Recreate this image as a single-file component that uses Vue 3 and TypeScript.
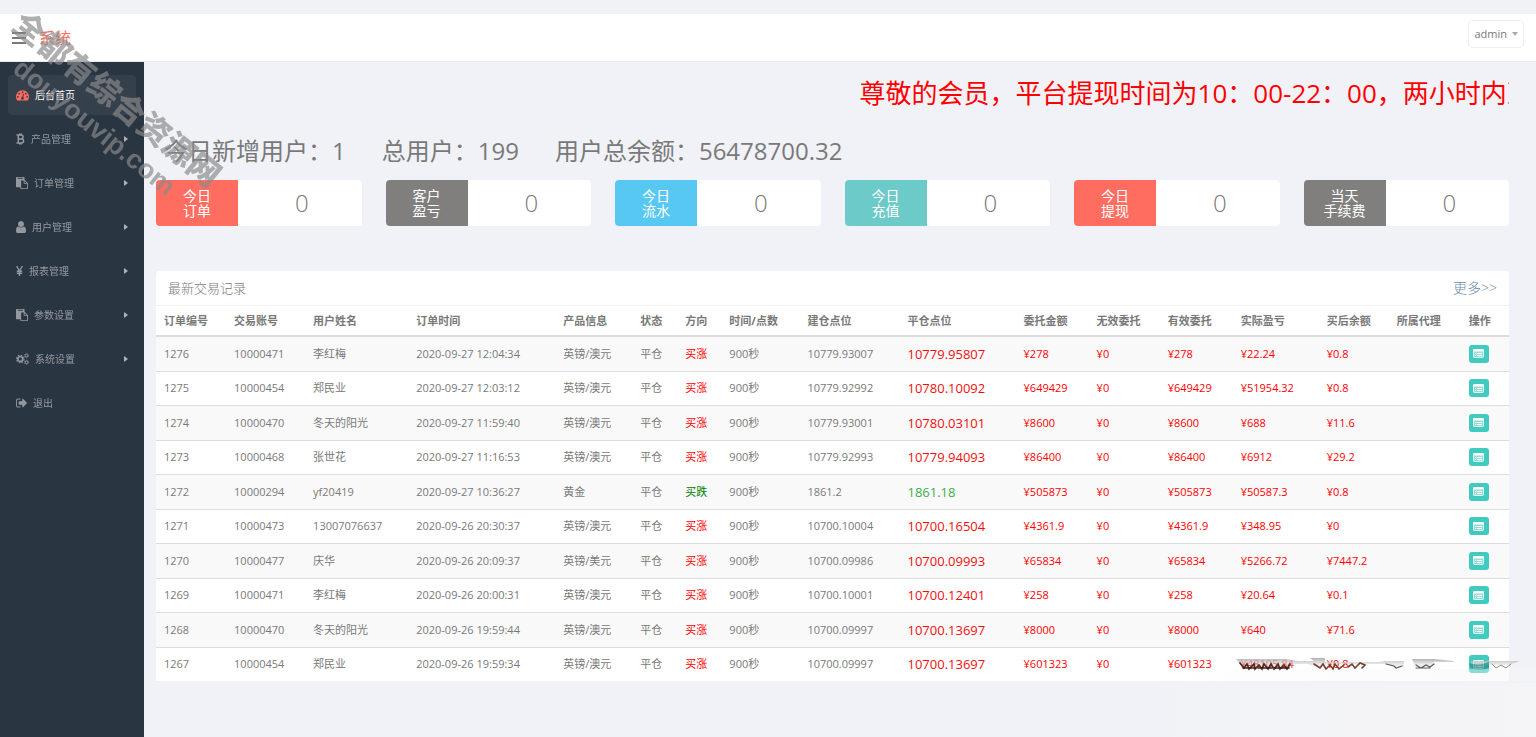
<script setup lang="ts">
import { ref } from 'vue'

interface MenuItem {
  label: string
  icon: 'dash' | 'btc' | 'paste' | 'user' | 'yen' | 'cogs' | 'exit'
  children: boolean
}

interface Order {
  id: string
  account: string
  name: string
  time: string
  product: string
  up: boolean
  open: string
  close: string
  amount: string
  valid: string
  profit: string
  balance: string
}

const active = ref(0)

const menu: MenuItem[] = [
  { label: '后台首页', icon: 'dash', children: false },
  { label: '产品管理', icon: 'btc', children: true },
  { label: '订单管理', icon: 'paste', children: true },
  { label: '用户管理', icon: 'user', children: true },
  { label: '报表管理', icon: 'yen', children: true },
  { label: '参数设置', icon: 'paste', children: true },
  { label: '系统设置', icon: 'cogs', children: true },
  { label: '退出', icon: 'exit', children: false },
]

const totals = [
  { label: '今日新增用户：', value: '1' },
  { label: '总用户：', value: '199' },
  { label: '用户总余额：', value: '56478700.32' },
]

const cards = [
  { top: '今日', bottom: '订单', tone: 'coral', value: 0 },
  { top: '客户', bottom: '盈亏', tone: 'gray', value: 0 },
  { top: '今日', bottom: '流水', tone: 'sky', value: 0 },
  { top: '今日', bottom: '充值', tone: 'teal', value: 0 },
  { top: '今日', bottom: '提现', tone: 'coral', value: 0 },
  { top: '当天', bottom: '手续费', tone: 'gray', value: 0 },
]

const columns = [
  { title: '订单编号', share: 70 },
  { title: '交易账号', share: 79 },
  { title: '用户姓名', share: 103 },
  { title: '订单时间', share: 147 },
  { title: '产品信息', share: 77 },
  { title: '状态', share: 45 },
  { title: '方向', share: 44 },
  { title: '时间/点数', share: 78 },
  { title: '建仓点位', share: 100 },
  { title: '平仓点位', share: 116 },
  { title: '委托金额', share: 73 },
  { title: '无效委托', share: 71 },
  { title: '有效委托', share: 73 },
  { title: '实际盈亏', share: 86 },
  { title: '买后余额', share: 70 },
  { title: '所属代理', share: 72 },
  { title: '操作', share: 48 },
]
const shareTotal = columns.reduce((sum, c) => sum + c.share, 0)

function order(
  id: string, account: string, name: string, time: string, product: string, up: boolean,
  open: string, close: string, amount: string, profit: string, balance: string,
): Order {
  return { id, account, name, time, product, up, open, close, amount, valid: amount, profit, balance }
}

const orders: Order[] = [
  order('1276', '10000471', '李红梅', '2020-09-27 12:04:34', '英镑/澳元', true, '10779.93007', '10779.95807', '278', '22.24', '0.8'),
  order('1275', '10000454', '郑民业', '2020-09-27 12:03:12', '英镑/澳元', true, '10779.92992', '10780.10092', '649429', '51954.32', '0.8'),
  order('1274', '10000470', '冬天的阳光', '2020-09-27 11:59:40', '英镑/澳元', true, '10779.93001', '10780.03101', '8600', '688', '11.6'),
  order('1273', '10000468', '张世花', '2020-09-27 11:16:53', '英镑/澳元', true, '10779.92993', '10779.94093', '86400', '6912', '29.2'),
  order('1272', '10000294', 'yf20419', '2020-09-27 10:36:27', '黄金', false, '1861.2', '1861.18', '505873', '50587.3', '0.8'),
  order('1271', '10000473', '13007076637', '2020-09-26 20:30:37', '英镑/澳元', true, '10700.10004', '10700.16504', '4361.9', '348.95', '0'),
  order('1270', '10000477', '庆华', '2020-09-26 20:09:37', '英镑/美元', true, '10700.09986', '10700.09993', '65834', '5266.72', '7447.2'),
  order('1269', '10000471', '李红梅', '2020-09-26 20:00:31', '英镑/澳元', true, '10700.10001', '10700.12401', '258', '20.64', '0.1'),
  order('1268', '10000470', '冬天的阳光', '2020-09-26 19:59:44', '英镑/澳元', true, '10700.09997', '10700.13697', '8000', '640', '71.6'),
  order('1267', '10000454', '郑民业', '2020-09-26 19:59:34', '英镑/澳元', true, '10700.09997', '10700.13697', '601323', '48105.84', '0.8'),
]
</script>

<template>
  <div class="page">
    <header class="topbar">
      <button class="toggle" type="button" aria-label="菜单"><i></i><i></i><i></i></button>
      <a class="brand" href="#">系统</a>
      <button class="account" type="button">admin<span class="caret"></span></button>
    </header>

    <div class="body">
      <nav class="sidebar">
        <a
          v-for="(item, i) in menu"
          :key="item.label"
          href="#"
          class="item"
          :class="{ active: i === active }"
          @click.prevent="active = i"
        >
          <svg v-if="item.icon === 'dash'" class="icon w13" viewBox="0 128 1792 1536">
            <path d="M384 1152q0-53-37.500-90.500t-90.500-37.500-90.500 37.500-37.500 90.500 37.500 90.500 90.500 37.500 90.500-37.500 37.500-90.500zm192-448q0-53-37.500-90.500t-90.500-37.500-90.500 37.500-37.500 90.500 37.500 90.500 90.500 37.500 90.500-37.500 37.500-90.500zm428 481l101-382q6-26-7.500-48.500t-38.500-29.500-48 6.500-30 39.500l-101 382q-60 5-107 43.500t-63 98.500q-20 77 20 146t117 89 146-20 89-117q16-60-6-117t-72-91zm660-33q0-53-37.500-90.500t-90.500-37.500-90.500 37.500-37.500 90.500 37.500 90.500 90.500 37.500 90.500-37.500 37.500-90.500zm-640-640q0-53-37.500-90.500t-90.500-37.500-90.500 37.500-37.500 90.500 37.500 90.500 90.500 37.500 90.500-37.500 37.500-90.500zm448 192q0-53-37.500-90.500t-90.500-37.500-90.500 37.500-37.500 90.500 37.500 90.500 90.500 37.500 90.500-37.500 37.500-90.500zm320 448q0 261-141 483-19 29-54 29h-1402q-35 0-54-29-141-221-141-483 0-182 71-348t191-286 286-191 348-71 348 71 286 191 191 286 71 348z" />
          </svg>
          <svg v-else-if="item.icon === 'btc'" class="icon w9" viewBox="0 0 8 12">
            <path d="M0 2h5M0 10h5M1.800 2v8M2 6h3M3.200 .4V2M4.800 .4V2M3.200 10v1.600M4.800 10v1.600M4.500 2q2 0 2 2t-2 2q2.600 0 2.600 2t-2.600 2" fill="none" stroke="currentColor" stroke-width="1.500" />
          </svg>
          <svg v-else-if="item.icon === 'paste'" class="icon w12" viewBox="0 0 1792 1792">
            <path d="M768 1664h896v-640h-416q-40 0-68-28t-28-68v-416h-384v1152zm256-1440v-64q0-13-9.500-22.500t-22.500-9.500h-704q-13 0-22.500 9.500t-9.500 22.500v64q0 13 9.500 22.500t22.500 9.500h704q13 0 22.500-9.500t9.500-22.500zm256 672h299l-299-299v299zm512 128v672q0 40-28 68t-68 28h-960q-40 0-68-28t-28-68v-160h-544q-40 0-68-28t-28-68v-1344q0-40 28-68t68-28h1088q40 0 68 28t28 68v328q21 13 36 28l408 408q28 28 48 76t20 88z" />
          </svg>
          <svg v-else-if="item.icon === 'user'" class="icon w10" viewBox="256 128 1280 1536">
            <path d="M1536 1399q0 109-62.500 187t-150.500 78h-854q-88 0-150.500-78t-62.500-187q0-85 8.500-160.500t31.500-152 58.500-131 94-89 134.500-34.500q131 128 313 128t313-128q76 0 134.500 34.500t94 89 58.500 131 31.500 152 8.500 160.500zm-256-887q0 159-112.500 271.500t-271.500 112.500-271.500-112.500-112.500-271.500 112.500-271.500 271.500-112.500 271.500 112.500 112.500 271.500z" />
          </svg>
          <svg v-else-if="item.icon === 'yen'" class="icon w7" viewBox="0 0 7 12">
            <path d="M.6 1L3.500 6L6.400 1M3.500 6v5M.8 6.200h5.400M.8 8.200h5.400" fill="none" stroke="currentColor" stroke-width="1.400" />
          </svg>
          <svg v-else-if="item.icon === 'cogs'" class="icon w13" viewBox="0 0 13 12">
            <g fill="none" stroke="currentColor">
              <circle cx="4.300" cy="6" r="2.500" stroke-width="1.700" />
              <circle cx="4.300" cy="6" r="3.800" stroke-width="1.100" stroke-dasharray="1.500 1.480" />
              <circle cx="10.500" cy="2.700" r="1.300" stroke-width="1" />
              <circle cx="10.500" cy="2.700" r="2.100" stroke-width=".7" stroke-dasharray="1.100 1.100" />
              <circle cx="10.500" cy="9.300" r="1.300" stroke-width="1" />
              <circle cx="10.500" cy="9.300" r="2.100" stroke-width=".7" stroke-dasharray="1.100 1.100" />
            </g>
          </svg>
          <svg v-else class="icon w11" viewBox="64 192 1568 1408">
            <path d="M704 1440q0 4 1 20t.5 26.500-3 23.500-10 19.500-20.500 6.500h-320q-119 0-203.500-84.500t-84.500-203.500v-704q0-119 84.500-203.500t203.500-84.500h320q13 0 22.500 9.500t9.500 22.500q0 4 1 20t.5 26.500-3 23.500-10 19.500-20.500 6.500h-320q-66 0-113 47t-47 113v704q0 66 47 113t113 47h312l11.500 1 11.500 3 8 5.500 7 9 2 13.500zm928-544q0 26-19 45l-544 544q-19 19-45 19t-45-19-19-45v-288h-448q-26 0-45-19t-19-45v-384q0-26 19-45t45-19h448v-288q0-26 19-45t45-19 45 19l544 544q19 19 19 45z" />
          </svg>
          <span>{{ item.label }}</span>
          <span v-if="item.children" class="arrow"></span>
        </a>
      </nav>

      <main class="main">
        <div class="notice"><p>尊敬的会员，平台提现时间为10：00-22：00，两小时内到</p></div>

        <div class="totals">
          <span v-for="t in totals" :key="t.label">{{ t.label }}{{ t.value }}</span>
        </div>

        <section class="cards">
          <div v-for="(c, i) in cards" :key="i" class="card">
            <div class="tag" :class="c.tone">{{ c.top }}<br />{{ c.bottom }}</div>
            <div class="count">{{ c.value }}</div>
          </div>
        </section>

        <section class="panel">
          <div class="panel-head">
            <h2>最新交易记录</h2>
            <a href="#">更多&gt;&gt;</a>
          </div>
          <table>
            <colgroup>
              <col v-for="c in columns" :key="c.title" :style="{ width: (c.share / shareTotal) * 100 + '%' }" />
            </colgroup>
            <thead>
              <tr><th v-for="c in columns" :key="c.title" scope="col">{{ c.title }}</th></tr>
            </thead>
            <tbody>
              <tr v-for="o in orders" :key="o.id">
                <td>{{ o.id }}</td>
                <td>{{ o.account }}</td>
                <td>{{ o.name }}</td>
                <td>{{ o.time }}</td>
                <td>{{ o.product }}</td>
                <td>平仓</td>
                <td :class="o.up ? 'red' : 'green'">{{ o.up ? '买涨' : '买跌' }}</td>
                <td>900秒</td>
                <td>{{ o.open }}</td>
                <td class="price" :class="{ down: !o.up }">{{ o.close }}</td>
                <td class="red">¥{{ o.amount }}</td>
                <td class="red">¥0</td>
                <td class="red">¥{{ o.valid }}</td>
                <td class="red">¥{{ o.profit }}</td>
                <td class="red">¥{{ o.balance }}</td>
                <td></td>
                <td>
                  <button class="view" type="button" aria-label="查看">
                    <svg viewBox="0 0 11 9">
                      <rect x=".5" y=".5" width="10" height="8" rx=".8" fill="#fff" fill-opacity=".4" stroke="#fff" stroke-opacity=".85" />
                      <path d="M0 .5h11v2H0z" fill="#fff" />
                      <path d="M2 4.500h1.200M4 4.500h5M2 6.500h1.200M4 6.500h5" stroke="#fff" />
                    </svg>
                  </button>
                </td>
              </tr>
            </tbody>
          </table>
        </section>

        <svg class="smudge" viewBox="0 0 376 80" aria-hidden="true">
          <defs>
            <linearGradient id="haze" x1="0" x2="1" y1="0" y2="0">
              <stop offset="0" stop-color="#f5f5f6" stop-opacity="0" />
              <stop offset=".3" stop-color="#f5f5f6" stop-opacity=".5" />
              <stop offset="1" stop-color="#f5f5f6" stop-opacity=".9" />
            </linearGradient>
            <linearGradient id="shade" x1="0" x2="0" y1="0" y2="1">
              <stop offset="0" stop-color="#b0b0b0" />
              <stop offset="1" stop-color="#e4e4e4" stop-opacity=".2" />
            </linearGradient>
            <filter id="soft" x="-10%" y="-50%" width="120%" height="200%"><feGaussianBlur stdDeviation=".7" /></filter>
          </defs>
          <rect x="0" y="26" width="376" height="54" fill="url(#haze)" />
          <rect x="0" y="12" width="376" height="13" fill="url(#haze)" opacity=".5" />
          <g filter="url(#soft)">
            <path d="M76 2h50l12 2h16l-4-3h15v4h54l6-1h19v7h-10l-8-4h-60v3h-12l-6-3h-14v3H82z" fill="url(#shade)" />
            <path d="M252 2h22l20 2v1h-20l-3 5h-16zM311 4h49l-10 4h-39z" fill="url(#shade)" />
            <g fill="none" stroke-linecap="round">
              <path d="M80 6l4 5 3-4 2 5 5-5 1 5 4-4 3 4 2-5 4 5 3-5 3 5 4-5 2 5 4-4 3 4 3-5" stroke="#582a22" stroke-width="1.800" />
              <path d="M83 11h12M98 11h14M115 11h14" stroke="#3d1f1b" stroke-width="1.600" />
              <path d="M154 7l6 4 3-4 3 5 4-4 3 4 2-5 4 5 5-4M188 10l4-3 3 4 5-5 5 2-3 3" stroke="#74402f" stroke-width="1.600" />
              <path d="M226 7l8 2 2 2 6-2M256 8l5 3 5-3 4 2 4-3M256 11h14" stroke="#555d59" stroke-width="1.200" />
              <path d="M332 7l4 4 5-3 5 3 5-4" stroke="#8f8783" stroke-width="1" />
            </g>
            <path d="M309 6q10 3 20-1v6q-10 3-18 0z" fill="#1b7f72" opacity=".55" />
          </g>
        </svg>
      </main>
    </div>

    <div class="watermark" aria-hidden="true">
      <span>全都有综合资源网</span>
      <span class="latin">douyouvip.com</span>
    </div>
  </div>
</template>

<style>
body {
  margin: 0;
  background: #f1f2f7;
}
</style>

<style scoped>
.page {
  position: relative;
  display: flex;
  flex-direction: column;
  min-height: 100vh;
  overflow: hidden;
  box-sizing: border-box;
  padding-top: 14px;
  color: #797979;
  font: 11px/16px "Open Sans", "Noto Sans CJK SC", sans-serif;
}
a {
  text-decoration: none;
  color: inherit;
}
button {
  font: inherit;
  color: inherit;
  cursor: pointer;
}
.topbar {
  display: flex;
  align-items: center;
  height: 48px;
  box-sizing: border-box;
  padding: 0 12px;
  background: #fff;
  border-bottom: 1px solid #e9eaee;
}
.toggle {
  display: flex;
  flex-direction: column;
  gap: 3px;
  width: 14px;
  padding: 0;
  border: 0;
  background: none;
}
.toggle i {
  height: 2px;
  background: #797979;
}
.brand {
  margin-left: 13px;
  font-size: 16px;
  line-height: 24px;
  color: #ff6c60;
}
.account {
  display: flex;
  align-items: center;
  gap: 5px;
  margin: 0 0 8px auto;
  height: 28px;
  padding: 0 5px;
  background: #fff;
  border: 1px solid #eee;
  border-radius: 4px;
}
.caret {
  border: 3px solid transparent;
  border-top: 4px solid #a4aab0;
  border-bottom: 0;
}
.body {
  display: flex;
  flex: 1;
}
.sidebar {
  display: flex;
  flex-direction: column;
  flex: none;
  gap: 4px;
  width: 144px;
  box-sizing: border-box;
  padding: 13px 8px;
  background: #2a3542;
}
.item {
  display: flex;
  align-items: center;
  gap: 6px;
  height: 40px;
  box-sizing: border-box;
  padding: 0 8px;
  border-radius: 4px;
  font-size: 10px;
  color: #aeb2b7;
  opacity: .8;
}
.item.active {
  background: #35404d;
  color: #fff;
  opacity: 1;
}
.active .icon {
  color: #ff6c60;
}
.icon {
  flex: none;
  height: 12px;
  fill: currentColor;
}
.w7 { width: 7px; }
.w9 { width: 9px; }
.w10 { width: 10px; }
.w11 { width: 11px; }
.w12 { width: 12px; }
.w13 { width: 13px; }
.arrow {
  margin-left: auto;
  border: 3px solid transparent;
  border-left: 4px solid #d0d3d6;
  border-right: 0;
}
.main {
  position: relative;
  flex: 1;
  min-width: 0;
  box-sizing: border-box;
  padding: 12px 27px 12px 12px;
}
.notice {
  overflow: hidden;
  white-space: nowrap;
  height: 38px;
  color: #f00;
  font-size: 26px;
  line-height: 38px;
}
.notice p {
  margin: 0 0 0 52%;
}
.totals {
  display: flex;
  gap: 36px;
  margin-top: 20px;
  padding: 0 8px;
  font-size: 24px;
  line-height: 38px;
}
.cards {
  display: grid;
  grid-template-columns: repeat(6, 1fr);
  gap: 24px;
  margin-top: 10px;
}
.card {
  display: flex;
  height: 46px;
  overflow: hidden;
  border-radius: 4px;
  background: #fff;
}
.tag {
  box-sizing: border-box;
  width: 40%;
  padding-top: 8px;
  text-align: center;
  color: #fff;
  font-size: 14px;
  line-height: 15px;
}
.coral { background: #ff6c60; }
.gray { background: #817f7e; }
.sky { background: #57c8f2; }
.teal { background: #6ccac9; }
.count {
  flex: 1;
  padding-left: 4px;
  text-align: center;
  font-size: 24px;
  line-height: 46px;
  font-weight: 300;
}
.panel {
  margin-top: 45px;
  overflow: hidden;
  border-radius: 4px 4px 0 0;
  background: #fff;
}
.panel-head {
  display: flex;
  align-items: center;
  justify-content: space-between;
  height: 34px;
  padding: 0 12px;
  border-bottom: 1px solid #f0f1f4;
}
.panel-head h2 {
  margin: 0;
  font-size: 13px;
  font-weight: 300;
}
.panel-head a {
  font-size: 14px;
  font-weight: 300;
  color: #6c8ba8;
}
table {
  width: 100%;
  height: 375px;
  table-layout: fixed;
  border-collapse: separate;
  border-spacing: 0;
}
th,
td {
  padding: 0 0 0 8px;
  text-align: left;
  white-space: nowrap;
  line-height: 16px;
}
th {
  height: 29px;
  font-weight: 700;
  border-bottom: 2px solid #ddd;
}
td {
  height: 33px;
  border-bottom: 1px solid #ddd;
}
tbody tr:last-child td {
  border-bottom: 0;
}
tbody tr:nth-child(odd) {
  background: #f9f9f9;
}
.red { color: #f00; }
.green { color: #008000; }
.price {
  font-size: 13px;
  color: #f00f0f;
}
.price.down {
  color: #3fae49;
}
.view {
  display: flex;
  align-items: center;
  justify-content: center;
  width: 20px;
  height: 18px;
  padding: 0;
  border: 0;
  border-radius: 3px;
  background: #41cac0;
}
.view svg {
  width: 11px;
  height: 9px;
}
.smudge {
  position: absolute;
  right: 0;
  bottom: 0;
  width: 376px;
  height: 80px;
  pointer-events: none;
}
.watermark {
  position: absolute;
  left: -29px;
  top: 77px;
  display: flex;
  flex-direction: column;
  align-items: center;
  width: 270px;
  transform: rotate(39deg);
  white-space: nowrap;
  font-size: 32px;
  line-height: 36px;
  font-weight: 900;
  color: #8a8a8a;
  opacity: .68;
  pointer-events: none;
}
.latin {
  font-family: "Liberation Sans", sans-serif;
  font-size: 27px;
  font-weight: 700;
}
</style>
